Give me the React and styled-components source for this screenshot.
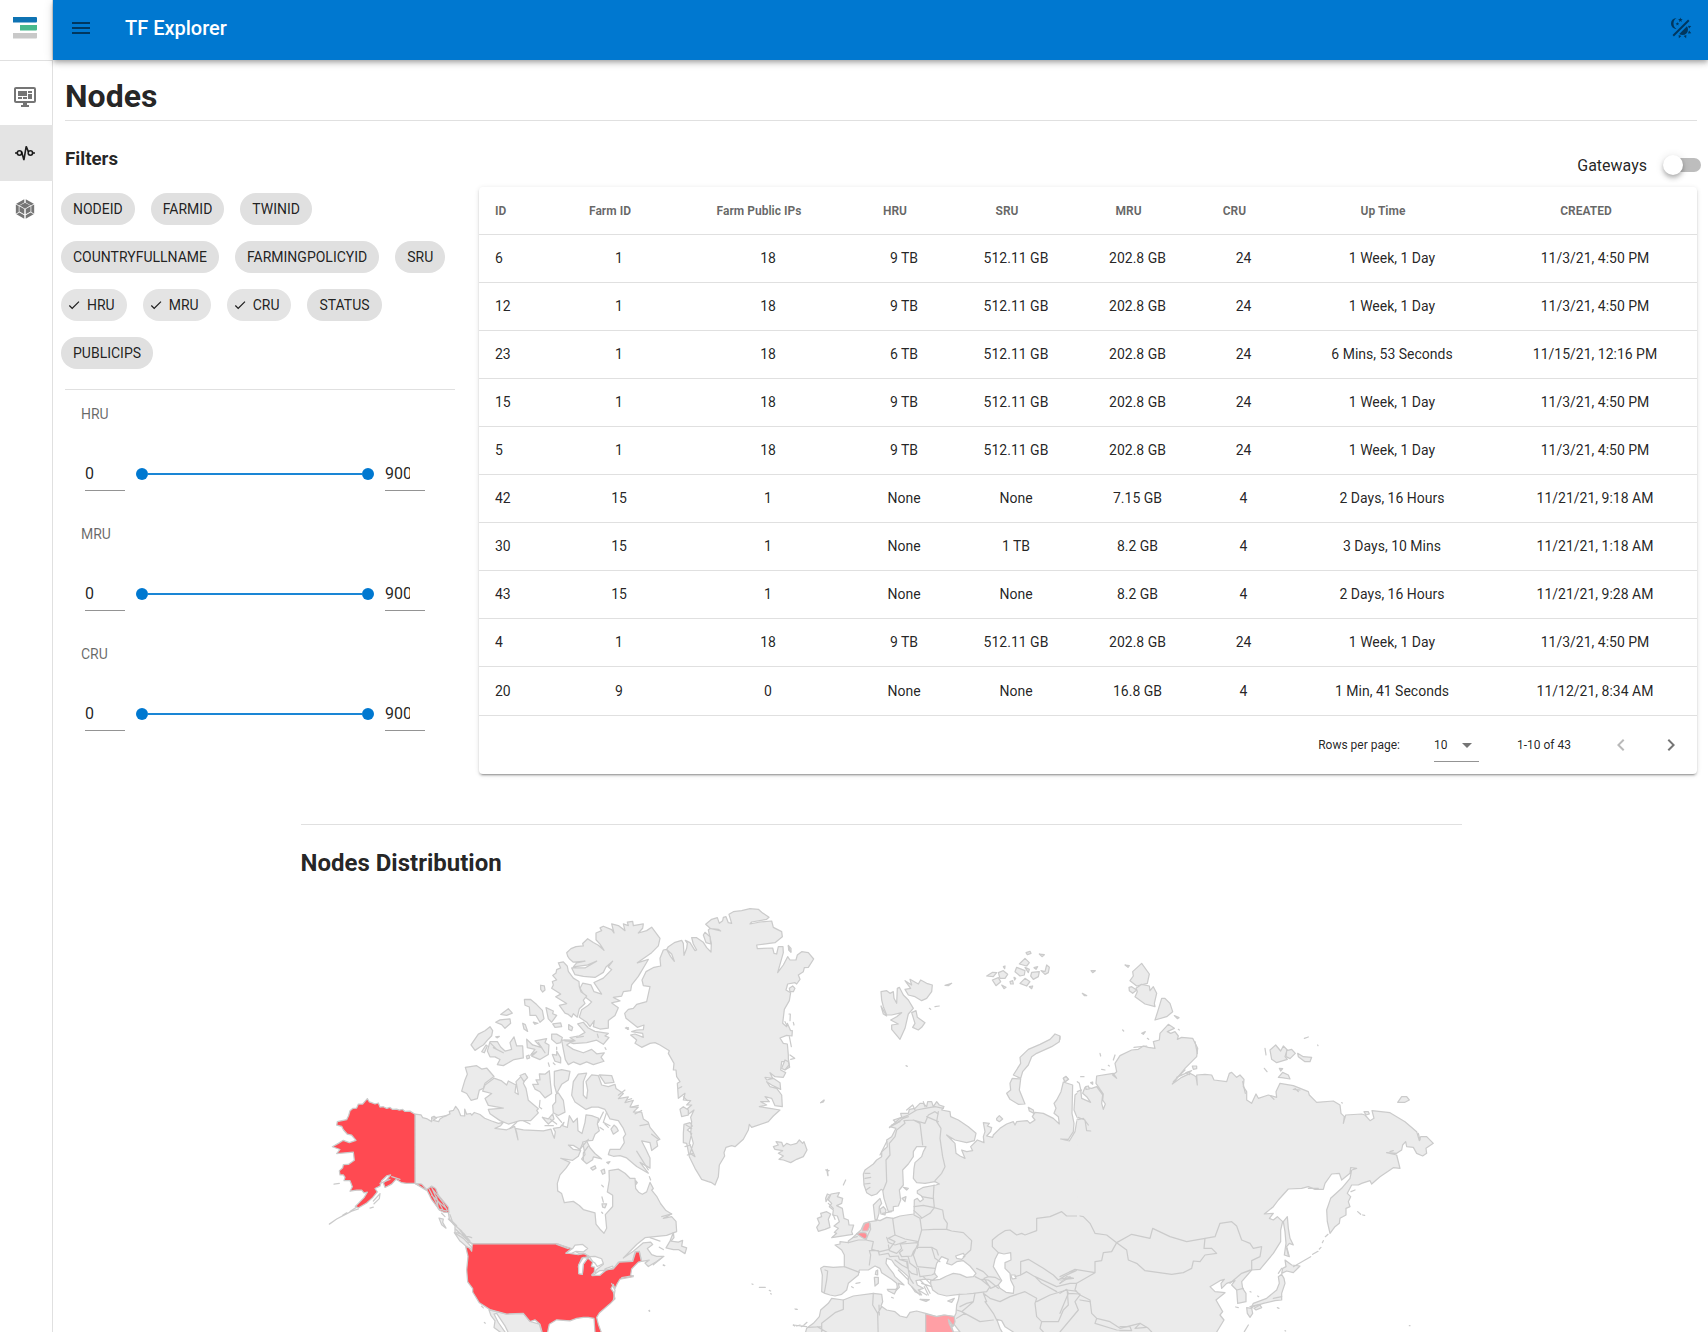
import React from "react";
import styled, { createGlobalStyle, css } from "styled-components";

const GlobalStyle = createGlobalStyle`
  * { box-sizing: border-box; }
  body { margin: 0; background: #fff; overflow: hidden; }
`;

const Shell = styled.div`
  display: flex;
  height: 1332px;
  overflow: hidden;
  font-family: Roboto, "Liberation Sans", sans-serif;
  color: rgba(0, 0, 0, 0.87);
  background: #fff;
`;

const Sidebar = styled.aside`
  flex: 0 0 53px;
  border-right: 1px solid #e0e0e0;
`;

const LogoBox = styled.div`
  height: 61px;
  padding: 17px 0 0 13px;
  border-bottom: 1px solid #e0e0e0;
  svg { display: block; }
`;

const NavList = styled.nav`
  padding-top: 8px;
`;

const NavItem = styled.div`
  height: 56px;
  padding-right: 3px;
  display: flex;
  align-items: center;
  justify-content: center;
  margin-right: -1px;
  color: ${(p) => (p.$active ? "rgba(0,0,0,.87)" : "rgba(0,0,0,.54)")};
  background: ${(p) => (p.$active ? "#e4e4e4" : "transparent")};
`;

const Main = styled.div`
  flex: 1;
  min-width: 0;
  display: flex;
  flex-direction: column;
`;

const Header = styled.header`
  flex: 0 0 60px;
  display: flex;
  align-items: center;
  padding: 0 15px 4px 16px;
  background: #0078d0;
  color: rgba(0, 0, 0, 0.54);
  box-shadow: 0 2px 4px -1px rgba(0, 0, 0, 0.2), 0 4px 5px rgba(0, 0, 0, 0.14),
    0 1px 10px rgba(0, 0, 0, 0.12);
`;

const AppTitle = styled.div`
  margin: 0 auto 0 32px;
  color: #fff;
  font-size: 20px;
  font-weight: 500;
  line-height: 24px;
`;

const Content = styled.main`
  padding: 0 11px 0 12px;
`;

const PageTitle = styled.h1`
  margin: 0;
  height: 61px;
  padding-top: 17px;
  font-size: 32px;
  line-height: 38px;
  font-weight: 700;
  border-bottom: 1px solid #e0e0e0;
`;

const Columns = styled.div`
  display: flex;
  gap: 24px;
  height: 703px;
`;

const Filters = styled.section`
  width: 390px;
`;

const FiltersTitle = styled.h3`
  margin: 0;
  height: 72px;
  padding-top: 26px;
  font-size: 18.72px;
  line-height: 24px;
  font-weight: 700;
`;

const Chips = styled.div`
  display: flex;
  flex-wrap: wrap;
  gap: 16px;
  margin: 0 -4px 20px;
`;

const Chip = styled.span`
  height: 32px;
  display: inline-flex;
  align-items: center;
  border-radius: 16px;
  padding: 0 12px;
  font-size: 14px;
  background: #e0e0e0;
  ${(p) =>
    p.$on &&
    css`
      background: #e4e4e4;
      padding-left: 4px;
      svg { margin-right: 4px; }
    `}
`;

const Ranges = styled.div`
  border-top: 1px solid #e0e0e0;
`;

const Range = styled.div`
  height: 120px;
  padding: 14px 30px 0 16px;
`;

const RangeLabel = styled.div`
  height: 20px;
  line-height: 20px;
  font-size: 14px;
  color: rgba(0, 0, 0, 0.6);
`;

const RangeRow = styled.div`
  display: flex;
  align-items: flex-end;
  margin: 33px 0 0 4px;
`;

const NumberBox = styled.div`
  width: 40px;
  height: 34px;
  padding-right: 15px;
  border-bottom: 1px solid #949494;
  font-size: 16px;
  line-height: 33px;

  span { display: block; overflow: hidden; }
`;

const Track = styled.div`
  flex: 0 0 238px;
  display: flex;
  align-items: center;
  margin: 0 11px 11px;
`;

const Thumb = styled.i`
  width: 12px;
  height: 12px;
  border-radius: 50%;
  background: #0078d0;
`;

const Bar = styled.i`
  flex: 1;
  height: 2px;
  background: #1a86d5;
`;

const TablePanel = styled.section`
  width: 1218px;
`;

const SwitchRow = styled.div`
  display: flex;
  align-items: center;
  justify-content: flex-end;
  height: 66px;
  padding-top: 22px;
  margin-right: -4px;
  font-size: 16px;
`;

const SwitchTrack = styled.div`
  display: flex;
  align-items: center;
  width: 36px;
  height: 14px;
  margin-left: 18px;
  border-radius: 7px;
  background: #bdbdbd;

  i {
    flex: none;
    width: 20px;
    height: 20px;
    margin-left: -2px;
    border-radius: 50%;
    background: #fff;
    box-shadow: 0 2px 4px -1px rgba(0, 0, 0, 0.2), 0 4px 5px rgba(0, 0, 0, 0.14),
      0 1px 10px rgba(0, 0, 0, 0.12);
  }
`;

const Card = styled.div`
  height: 587px;
  border-radius: 4px;
  background: #fff;
  box-shadow: 0 3px 1px -2px rgba(0, 0, 0, 0.2), 0 2px 2px rgba(0, 0, 0, 0.14),
    0 1px 5px rgba(0, 0, 0, 0.12);
`;

const Table = styled.table`
  width: 100%;
  table-layout: fixed;
  border-collapse: separate;
  border-spacing: 0;

  th, td {
    height: 48px;
    padding: 0 16px;
    text-align: center;
    border-bottom: 1px solid #e0e0e0;
    white-space: nowrap;
  }
  th {
    padding-right: 34px;
    padding-top: 1px;
    font-size: 12px;
    font-weight: 700;
    color: rgba(0, 0, 0, 0.6);
  }
  td { font-size: 14px; padding-bottom: 1px; }
  th:first-child, td:first-child { text-align: left; padding-right: 0; }
  tr:last-child td { height: 49px; padding-bottom: 0; }
`;

const Footer = styled.div`
  display: flex;
  align-items: center;
  justify-content: flex-end;
  height: 58px;
  padding-right: 14px;
  font-size: 12px;
`;

const PageSize = styled.div`
  display: flex;
  align-items: center;
  justify-content: space-between;
  width: 45px;
  height: 33px;
  margin: 0 38px 0 34px;
  padding: 0 2px 0 0;
  border-bottom: 1px solid #949494;
  svg { display: block; color: rgba(0, 0, 0, 0.54); }
`;

const PageNav = styled.div`
  display: flex;
  gap: 26px;
  margin-left: 38px;
  color: rgba(0, 0, 0, 0.54);
  svg:first-child { opacity: 0.5; }
`;

const MapSection = styled.section`
  width: 1161px;
  margin-left: 235.500px;
  border-top: 1px solid #e0e0e0;
`;

const MapTitle = styled.h2`
  margin: 0;
  height: 75px;
  padding-top: 24px;
  font-size: 24px;
  line-height: 28px;
  font-weight: 700;
`;

const MapSvg = styled.svg`
  display: block;
  fill: #ebebeb;
  stroke: #cbcbcb;
  stroke-width: 3.7;
  stroke-linejoin: round;
  stroke-linecap: round;
  .sea { fill: #fff; }
  .line { fill: none; }
  .hot { fill: #ff4a52; }
  .warm { fill: #ff8f95; }
  .mild { fill: #ff9fa5; }
`;

const Glyph = ({ d, size = 24, box = "0 0 24 24" }) => (
  <svg width={size} height={size} viewBox={box} fill="currentColor">
    <path d={d} />
  </svg>
);

const icons = {
  menu: "M3,6H21V8H3V6M3,11H21V13H3V11M3,16H21V18H3V16Z",
  theme:
    "M7.5,2C5.71,3.15 4.5,5.18 4.5,7.5C4.5,9.82 5.71,11.85 7.53,13C4.46,13 2,10.54 2,7.5A5.5,5.5 0 0,1 7.5,2M19.07,3.5L20.5,4.93L4.93,20.5L3.5,19.07L19.07,3.5M12.89,5.93L11.41,5L9.97,6L10.39,4.3L9,3.24L10.75,3.12L11.33,1.47L12,3.1L13.73,3.13L12.38,4.26L12.89,5.93M9.59,9.54L8.43,8.81L7.31,9.59L7.65,8.27L6.56,7.44L7.92,7.35L8.37,6.06L8.88,7.33L10.24,7.36L9.19,8.23L9.59,9.54M19,13.5A5.5,5.5 0 0,1 13.5,19C12.28,19 11.15,18.6 10.24,17.93L17.93,10.24C18.6,11.15 19,12.28 19,13.5M14.6,20.08L17.37,18.93L17.13,22.28L14.6,20.08M18.93,17.38L20.08,14.61L22.28,17.15L18.93,17.38M20.08,12.42L18.94,9.64L22.28,9.88L20.08,12.42M9.63,18.93L12.4,20.08L9.87,22.27L9.63,18.93Z",
  monitor:
    "M21,16V4H3V16H21M21,2A2,2 0 0,1 23,4V16A2,2 0 0,1 21,18H14V20H16V22H8V20H10V18H3C1.89,18 1,17.1 1,16V4C1,2.89 1.89,2 3,2H21M5,6H14V11H5V6M15,6H19V8H15V6M19,9V14H15V9H19M5,12H9V14H5V12M10,12H14V14H10V12Z",
  cube:
    "M19.38,15.99L12.38,19.95V16.87L16.74,14.47L19.38,15.99M19.86,15.56V7.28L17.3,8.75V14.08L19.86,15.56M4.1,16L11.1,19.94V16.86L6.74,14.46L4.1,16M3.62,15.55V7.27L6.18,8.75V14.07L3.62,15.55M3.92,6.74L11.1,2.68V5.66L6.5,8.19L6.46,8.21L3.92,6.74M19.56,6.74L12.38,2.68V5.66L16.98,8.19L17,8.21L19.56,6.74M11.1,15.96L6.8,13.59V8.91L11.1,11.4V15.96M12.38,15.96L16.68,13.6V8.91L12.38,11.4V15.96M7.1,8.34L11.74,5.79L16.38,8.34L11.74,11.03L7.1,8.34Z",
  check: "M21,7L9,19L3.5,13.5L4.91,12.09L9,16.17L19.59,5.59L21,7Z",
  caret: "M7,10L12,15L17,10H7Z",
  left: "M15.41,16.58L10.83,12L15.41,7.41L14,6L8,12L14,18L15.41,16.58Z",
  right: "M8.59,16.58L13.17,12L8.59,7.41L10,6L16,12L10,18L8.59,16.58Z",
};

const NodesGlyph = () => (
  <svg width="24" height="24" viewBox="0 0 24 24" fill="none" stroke="currentColor" strokeWidth="1.6" strokeLinejoin="bevel">
    <circle cx="6.5" cy="12" r="2.2" />
    <circle cx="17.4" cy="12" r="2.2" />
    <path d="M2 12H4.2M19.800 12H22M8.600 10.600L10.900 19L13.200 5.400L15.400 10.800" />
  </svg>
);

const Logo = () => (
  <svg width="24" height="22" viewBox="0 0 24 22">
    <path fill="#0e73b3" d="M0 0H23q1 0 1 1V4.500q0 1-1 1H0Z" />
    <path fill="#47b98d" d="M7 8H24V12.500q0 1-1 1H7Z" />
    <path fill="#c9c9c9" d="M0 16H24V20.500q0 1-1 1H0Z" />
  </svg>
);

const chips = [
  "NODEID", "FARMID", "TWINID", "COUNTRYFULLNAME", "FARMINGPOLICYID", "SRU",
  "HRU", "MRU", "CRU", "STATUS", "PUBLICIPS",
];
const ranges = ["HRU", "MRU", "CRU"];

const widths = [78, 124, 174, 98, 126, 117, 95, 202, 204];
const heads = ["ID", "Farm ID", "Farm Public IPs", "HRU", "SRU", "MRU", "CRU", "Up Time", "CREATED"];
const rows = [
  ["6", "1", "18", "9 TB", "512.11 GB", "202.8 GB", "24", "1 Week, 1 Day", "11/3/21, 4:50 PM"],
  ["12", "1", "18", "9 TB", "512.11 GB", "202.8 GB", "24", "1 Week, 1 Day", "11/3/21, 4:50 PM"],
  ["23", "1", "18", "6 TB", "512.11 GB", "202.8 GB", "24", "6 Mins, 53 Seconds", "11/15/21, 12:16 PM"],
  ["15", "1", "18", "9 TB", "512.11 GB", "202.8 GB", "24", "1 Week, 1 Day", "11/3/21, 4:50 PM"],
  ["5", "1", "18", "9 TB", "512.11 GB", "202.8 GB", "24", "1 Week, 1 Day", "11/3/21, 4:50 PM"],
  ["42", "15", "1", "None", "None", "7.15 GB", "4", "2 Days, 16 Hours", "11/21/21, 9:18 AM"],
  ["30", "15", "1", "None", "1 TB", "8.2 GB", "4", "3 Days, 10 Mins", "11/21/21, 1:18 AM"],
  ["43", "15", "1", "None", "None", "8.2 GB", "4", "2 Days, 16 Hours", "11/21/21, 9:28 AM"],
  ["4", "1", "18", "9 TB", "512.11 GB", "202.8 GB", "24", "1 Week, 1 Day", "11/3/21, 4:50 PM"],
  ["20", "9", "0", "None", "None", "16.8 GB", "4", "1 Min, 41 Seconds", "11/12/21, 8:34 AM"],
];

/* Map shapes, grouped by region; each group has its own local coordinates. */
const america = {
  land: [
    // Canada, mainland
    "M375 926L393 928L398 936L412 940L425 948L425 935L432 932L440 937L430 944L446 948L450 940L462 933L480 925L478 918L490 915L497 903L505 913L512 930L524 931L524 911L530 926L542 924L545 929L553 921L570 927L584 938L605 946L625 953L640 950L632 960L615 968L650 972L674 962L684 1002L680 980L676 968L700 972L760 975L783 970L788 985L793 997L796 978L790 968L810 965L822 950L818 960L832 965L838 930L850 950L862 938L864 975L876 983L885 950L888 928L905 930L926 938L922 955L928 975L915 985L908 1003L890 1005L878 1012L870 1030L850 1018L835 1017L850 1030L872 1033L865 1050L848 1062L812 1056L840 1068L828 1085L810 1105L802 1130L803 1152L815 1160L823 1187L850 1183L868 1195L880 1207L915 1217L918 1250L930 1265L942 1277L950 1262L946 1222L968 1198L968 1165L952 1155L958 1120L957 1092L985 1088L1005 1100L1020 1115L1035 1115L1037 1145L1047 1157L1057 1162L1070 1155L1080 1127L1090 1145L1085 1150L1100 1168L1112 1190L1128 1210L1145 1220L1120 1233L1145 1228L1158 1242L1160 1272L1130 1283L1065 1290L1040 1310L1000 1350L1030 1330L1060 1305L1082 1303L1088 1310L1072 1322L1085 1340L1100 1345L1122 1345L1100 1360L1075 1375L1065 1365L1078 1356L1055 1360L1048 1330L1035 1332L1028 1358L985 1362L970 1382L945 1385L925 1400L915 1402L918 1385L940 1368L932 1352L912 1348L895 1348L885 1337L870 1338L845 1325L803 1308L547 1307L520 1300L495 1275L495 1255L478 1235L475 1215L455 1180L430 1145L410 1148L375 1130Z",
    // Ellesmere
    "M833 460L830 450L843 438L858 432L880 430L878 423L893 409L910 420L925 428L942 443L930 425L918 412L918 392L935 385L930 377L940 372L965 382L972 392L965 365L985 370L1005 385L1000 365L1015 370L1012 360L1028 358L1030 370L1060 365L1058 378L1045 392L1070 385L1085 375L1110 408L1105 430L1085 450L1042 480L1075 470L1068 482L1045 520L1025 545L1022 562L1000 565L995 578L970 582L990 592L965 598L985 612L975 635L955 650L955 672L930 675L910 668L913 650L900 668L890 655L868 640L875 618L895 605L905 595L885 580L870 555L878 540L903 545L912 565L935 572L920 550L912 538L940 525L965 500L955 492L968 475L948 492L940 508L915 523L880 520L855 515L845 495L885 495L920 475L890 487L850 492L860 480L885 475L850 478L838 468Z",
    // Axel Heiberg
    "M805 480L820 477L832 490L835 505L850 525L867 535L868 550L873 565L890 578L880 590L885 600L868 615L862 640L850 630L845 640L835 632L825 628L808 605L830 600L797 580L812 572L785 555L790 545L787 535L800 530L788 517L798 510L800 500L812 495Z",
    // Devon
    "M863 660L880 655L895 672L915 682L955 688L945 695L957 700L940 720L920 708L890 715L850 718L822 708L855 710L840 700L868 695L885 685Z",
    "M815 708L850 708L830 722L850 735L880 745L905 735L920 748L943 745L933 758L942 770L910 780L890 772L870 780L850 772L835 780L826 765L820 735Z",
    "M703 588L722 588L740 603L757 620L762 645L750 655L738 635L720 635L718 610L705 605Z",
    "M768 612L790 622L788 630L800 635L785 655L775 645Z",
    "M788 660L812 657L815 668L795 670Z", "M836 662L848 670L845 680L836 676Z",
    "M698 658L706 662L713 682L702 675Z", "M730 655L744 658L735 661Z", "M752 546L763 548L765 560L758 566L752 558Z",
    "M632 632L655 615L667 628L650 635Z", "M617 655L630 648L660 645L662 658L645 673L635 662Z", "M617 698L628 697L622 701Z",
    "M543 722L565 690L585 680L600 668L608 680L605 695L595 705L580 722L570 728L555 738Z",
    "M592 740L600 712L622 712L632 728L645 740L665 735L660 715L672 698L680 725L698 725L700 760L672 765L640 783L622 780L630 765L615 757L600 757Z",
    "M575 742L588 722L592 725L583 745Z",
    "M710 705L728 722L755 730L735 710L770 703L765 715L777 722L775 750L750 765L725 755L740 742L722 752L735 735L712 730Z",
    "M787 750L800 752L800 740L812 760L812 775L795 770Z", "M785 690L800 690L817 700L812 715L800 718L785 705Z", "M709 755L717 752L719 760L711 763Z",
    // Banks and Victoria
    "M526 788L560 783L575 793L590 790L612 815L585 835L580 850L568 855L562 880L543 885L530 865L515 858L525 825L532 808Z",
    "M612 820L635 828L650 840L655 828L678 840L675 862L685 868L678 830L700 808L710 815L700 835L708 850L715 885L745 910L740 915L745 922L722 945L690 945L655 955L630 945L600 925L595 912L640 908L595 900L585 880L605 865L578 858L585 840Z",
    "M690 812L705 806L713 818L702 830Z",
    "M728 838L745 838L738 825L750 825L748 807L765 808L778 798L782 840L785 865L765 878L750 860L735 852Z",
    "M793 800L815 795L840 800L835 825L815 838L800 865L793 840Z",
    "M797 868L805 863L820 885L825 920L805 930L790 922L788 900L797 890Z",
    "M757 935L775 940L788 925L792 940L775 955L768 948Z",
    // Baffin
    "M845 870L850 830L865 808L890 805L880 830L880 870L890 880L893 855L888 830L905 810L925 812L935 840L955 845L975 838L978 850L1000 865L985 880L1015 875L1005 892L1030 885L1020 905L1045 905L1030 920L1055 920L1060 940L1075 950L1080 965L1110 1000L1100 1005L1103 1020L1085 1033L1080 1010L1055 1005L1068 1030L1080 1055L1080 1085L1050 1068L1075 1100L1040 1080L1010 1055L990 1048L970 1050L955 1045L960 1030L990 1030L1003 1010L1000 995L1007 985L1000 968L985 945L960 940L945 912L925 905L905 905L888 912L855 890Z",
    "M928 810L965 812L972 832L945 835Z",
    "M963 970L972 958L980 965L985 975L970 985Z",
    // Southampton and Hudson Bay islands
    "M878 1008L890 1005L900 1025L915 1042L935 1058L910 1052L908 1060L890 1072L875 1058L885 1045Z",
    "M902 1085L915 1078L918 1085L908 1091Z", "M933 1092L943 1088L945 1100L938 1103Z", "M950 1068L960 1066L955 1072Z", "M936 1190L950 1190L945 1202L938 1200Z", "M1037 1122L1042 1128L1038 1133Z",
    // Newfoundland
    "M1128 1320L1140 1300L1150 1275L1152 1290L1143 1300L1165 1303L1178 1298L1175 1315L1190 1320L1185 1337L1165 1325L1150 1325Z",
    // Vancouver Island, Haida Gwaii
    "M493 1275L520 1292L545 1318L540 1325L510 1300Z", "M447 1232L460 1235L458 1245L468 1262L455 1252Z",
    // Mexico
    "M597 1503L650 1515L700 1513L720 1537L748 1545L765 1600L670 1600L645 1550L620 1513L612 1515L625 1540L650 1575L640 1575L612 1555L615 1535L603 1520Z",
  ],
  hot: [
    "M375 926L360 917L345 918L338 912L328 914L320 911L308 912L300 906L290 909L280 904L270 905L265 893L255 896L245 892L238 890L232 880L225 888L218 896L205 896L200 908L188 909L180 916L176 930L170 942L142 948L140 958L155 962L160 972L172 985L185 988L198 1003L178 1010L160 1003L145 1012L127 1022L150 1030L140 1042L190 1038L193 1062L175 1074L160 1075L158 1084L148 1093L150 1105L160 1105L165 1112L162 1122L180 1122L187 1140L180 1153L200 1150L215 1150L222 1158L232 1156L222 1172L208 1186L196 1198L206 1202L230 1188L248 1172L262 1155L255 1145L270 1138L275 1122L290 1108L302 1105L290 1120L280 1128L285 1142L305 1132L318 1118L335 1128L350 1130L375 1130Z",
    "M375 1130L395 1132L410 1148L425 1138L437 1145L445 1165L460 1182L475 1200L477 1216L462 1215L450 1210L425 1178L412 1152Z",
    "M527 1316L538 1320L545 1330L547 1308L800 1308L845 1322L828 1335L865 1340L882 1337L898 1345L875 1350L865 1375L868 1396L877 1398L880 1368L893 1350L908 1362L904 1375L914 1377L913 1392L905 1400L930 1400L945 1385L970 1382L988 1362L1028 1360L1037 1332L1048 1332L1054 1360L1045 1362L1025 1382L1022 1400L1030 1405L990 1412L982 1425L975 1440L970 1428L963 1440L970 1450L975 1470L960 1485L928 1512L920 1525L925 1545L938 1580L915 1570L912 1528L895 1525L880 1525L860 1528L840 1535L800 1532L778 1545L773 1568L773 1600L765 1600L750 1545L735 1532L720 1537L700 1513L650 1515L600 1502L568 1482L548 1450L548 1440L533 1420L530 1385L534 1345Z",
  ],
  line: [
    "M118 1250L140 1235L165 1222L185 1212L205 1205M158 1224L170 1217M180 1213L200 1200M132 1132L148 1130M250 1182L270 1160L268 1175L252 1190M240 1203L250 1200M270 1130L300 1118M305 1110L330 1118M418 1148L435 1180L448 1208M425 1142L440 1175L460 1210M425 1165L470 1205M430 1150L458 1185L472 1210M440 1170L445 1205L470 1212M475 1235L505 1262L522 1278L540 1300M480 1222L490 1250L515 1270M485 1240L500 1255M497 1265L535 1300M500 1275L545 1290M510 1268L545 1308M455 1218L465 1228",
    "M575 1492L580 1497M583 1540L586 1542M1077 1505L1079 1504M1120 1370L1124 1372M965 1425L975 1445L970 1475M1080 1290L1110 1300M1090 1370L1115 1350M1108 1318L1120 1325M995 1408L1030 1402M945 730L948 735M1010 670L1014 676M800 735L800 728M790 775L795 780M775 775L778 785",
    "M940 920L925 950M950 920L940 950L960 960M680 950L660 968M895 1020L880 1040L880 1062M935 1135L940 1140M936 1170L940 1185M935 1215L938 1218M870 1030L895 1000M765 960L790 960M700 945L720 955M600 715L620 735M610 730L640 745M745 715L765 745M825 710L850 712M1040 1035L1075 1090M1085 985L1105 1000M800 1310L835 1322M425 938L470 930M750 885L748 905L755 910M925 700L922 690M860 700L880 697M1078 1110L1082 1120",
    "M1145 1220L1115 1228M985 870L1005 855M1010 885L1025 880M1025 905L1045 900M1035 925L1055 915M1050 960L1075 955M780 940L800 955M798 930L815 950M945 955L955 965M930 965L940 972",
  ],
  sea: [
    "M828 1336L848 1322L855 1312L878 1310L893 1322L880 1332L858 1330L845 1336Z",
    "M866 1396L866 1370L880 1348L893 1350L880 1368L877 1398Z",
    "M898 1346L915 1345L935 1352L940 1366L922 1375L915 1365L908 1360Z",
    "M907 1402L930 1387L948 1386L930 1400Z", "M945 1382L968 1374L970 1380L950 1385Z",
  ],
};

const atlantic = {
  land: [
    // Greenland
    "M182 258L180 235L190 210L200 208L212 230L223 244L215 222L200 208L205 200L225 187L245 181L250 190L252 226L260 205L262 190L256 181L270 188L285 212L290 210L280 192L275 173L290 173L310 187L320 203L333 216L334 190L325 150L330 145L362 153L355 148L332 146L317 133L335 118L352 113L358 130L368 122L370 112L378 110L385 128L395 130L387 103L400 95L425 92L450 86L475 88L485 97L507 112L500 118L455 126L450 132L480 126L515 123L520 142L545 155L547 170L525 188L470 195L472 206L518 204L522 220L530 222L535 200L549 200L550 218L533 278L550 255L563 230L570 240L588 240L592 225L605 215L625 218L641 237L625 262L613 263L610 275L595 285L600 298L590 312L585 308L563 312L558 330L572 338L568 362L553 388L548 430L560 440L562 430L572 452L577 452L576 468L560 466L540 474L550 490L562 492L565 525L565 535L569 562L558 568L555 545L545 545L542 570L557 578L550 592L525 590L510 578L518 595L495 592L500 600L520 595L540 608L542 628L515 615L500 605L510 620L530 625L545 645L547 680L525 677L515 655L495 650L508 665L482 665L500 675L478 680L510 685L540 690L520 708L505 725L455 742L448 733L445 750L430 778L405 800L395 797L378 802L372 818L374 828L358 855L355 890L345 915L335 908L325 905L305 898L285 865L268 830L260 790L250 788L250 760L252 733L270 728L277 738L262 750L275 760L268 790L285 830L270 820L280 790L272 760L275 725L272 712L282 690L262 705L258 690L275 675L260 675L272 662L250 660L255 640L235 655L232 610L240 605L230 590L228 570L220 570L222 550L205 520L208 512L180 495L165 488L150 490L125 502L105 490L110 480L92 465L105 462L130 472L128 460L95 455L110 450L130 449L132 435L112 442L78 415L74 400L85 388L100 385L110 373L140 365L150 320L130 317L126 300L138 275L162 262Z",
    "M240 688L250 680L265 690L265 705L245 710Z", "M310 165L315 157L330 170L332 192L318 188Z", "M565 196L573 205L573 217L566 210Z",
    "M568 325L578 318L585 325L580 335L570 335Z", "M555 540L565 545L567 555L555 570L545 565Z",
    // Iceland
    "M520 800L535 795L528 785L545 787L550 800L560 790L572 795L590 790L598 780L608 790L612 785L621 810L610 830L590 838L572 848L550 840L537 838L550 828L535 820L548 812L525 808Z",
    "M78 444L85 443L83 448Z", "M662 668L672 660L670 666Z",
  ],
  line: [
    "M567 402L571 402L570 422M568 470L574 500M580 427L582 435M555 425L560 435M570 525L584 535L572 538M678 870L687 872M682 868L684 887M478 1222L496 1222M456 1212L459 1213M508 1231L512 1233M512 1241L514 1242M588 1288L592 1288M580 1335L584 1338M590 1338L600 1335M604 1340L610 1338M612 1335L621 1327M148 1293L149 1294M190 1156L194 1157M76 444L86 447",
    "M250 650L262 662M258 735L275 745M255 800L272 795M262 825L280 820M236 625L245 620",
  ],
};

const eurasiaWest = {
  mainland:
    "M905 450L897 455L885 465L882 510L888 525L898 545L890 545L885 575L868 603L842 597L865 598L880 575L882 550L876 520L878 435L850 426L843 455L830 480L822 490L828 505L822 520L835 530L838 552L820 535L790 520L765 517L757 530L765 540L750 550L742 542L710 545L705 555L700 545L680 552L660 565L640 585L638 592L620 588L632 575L635 563L622 558L628 550L610 548L615 575L610 590L612 608L592 600L572 620L578 632L560 635L545 630L555 655L540 648L528 640L525 610L515 600L500 585L525 600L560 608L583 602L588 580L565 560L535 540L512 530L510 515L485 510L492 500L478 495L470 485L460 500L455 485L443 485L440 500L430 490L420 490L405 505L388 508L385 520L362 520L365 532L340 540L350 550L330 560L348 565L335 590L320 600L322 620L305 635L305 650L290 660L280 672L255 690L250 702L252 735L260 758L275 767L290 762L303 748L308 750L312 775L320 800L325 815L340 812L340 800L355 798L362 780L358 750L370 735L368 690L385 672L400 650L400 635L410 620L438 620L430 635L425 650L405 668L402 685L400 715L410 728L435 730L465 725L478 732L468 735L430 742L412 752L412 760L425 768L430 778L420 785L412 775L403 780L402 822L380 825L360 828L340 835L320 832L300 842L285 838L280 795L300 775L305 790L298 800L297 820L290 842L270 845L252 850L243 870L230 882L218 893L205 903L205 908L180 905L180 912L165 915L185 930L193 945L193 980L160 982L132 979L122 985L127 1005L125 1055L135 1060L150 1065L165 1068L185 1063L200 1050L205 1030L235 1005L238 990L265 990L285 978L300 985L305 998L335 1018L350 1030L352 1042L340 1060L348 1052L358 1042L355 1030L372 1035L345 1010L340 1000L328 985L318 970L320 955L335 960L345 975L365 992L385 1010L385 1030L395 1040L405 1055L425 1065L415 1050L430 1045L412 1035L408 1022L430 1018L445 1018L458 1020L472 1010L463 1000L470 970L485 950L505 958L500 970L515 975L530 965L550 962L570 978L588 1000L580 1010L560 1012L540 1003L520 1000L500 1008L480 1018L452 1022L452 1032L458 1050L475 1062L500 1068L538 1063L535 1080L530 1095L528 1120L523 1130L490 1125L470 1130L437 1120L410 1113L390 1117L380 1133L360 1128L345 1115L320 1110L303 1098L308 1085L305 1063L280 1060L220 1068L190 1080L155 1075L145 1090L122 1110L118 1130L100 1150L80 1165L70 1200L905 1200",
  land: [
    // Svalbard
    "M303 155L320 152L330 160L340 155L342 175L350 190L352 145L358 142L370 165L385 180L400 205L385 222L375 265L360 298L335 268L335 255L355 252L332 240L350 230L365 218L335 225L320 225L310 200L305 180Z",
    "M375 122L395 135L390 118L415 132L422 120L440 130L457 135L455 155L440 175L425 182L405 170L385 165L375 148L392 145Z",
    "M395 218L408 212L412 232L435 248L425 262L415 270L398 262L405 250Z",
    "M303 198L310 210L320 228L310 222Z",
    // Franz Josef Land
    "M620 108L638 97L650 98L640 110Z", "M655 98L670 92L683 103L675 115L660 115Z", "M637 120L655 113L662 125L648 137Z",
    "M718 72L735 55L748 68L740 78Z", "M705 95L710 82L735 92L733 105L720 108Z", "M735 82L748 88L745 98Z", "M752 108L755 97L778 95L775 110L760 118Z", "M783 92L795 95L800 75L808 82L805 98L795 103Z",
    "M720 130L735 115L750 125L740 138Z", "M665 135L678 142L672 146Z", "M690 125L698 122L700 132L692 132Z", "M738 38L750 34L753 40L742 44Z", "M778 42L793 44L786 50Z", "M748 140L758 138L755 146Z", "M702 112L707 115L704 120Z", "M762 83L773 80L768 88Z", "M670 80L675 78L674 86Z",
    "M495 136L515 130L505 137Z",
    // Novaya Zemlya
    "M700 405L722 370L720 352L745 328L780 313L810 298L825 282L840 288L838 305L815 320L770 340L755 350L745 375L728 395L722 415Z",
    "M697 415L722 417L718 450L735 492L715 493L690 478L680 460L692 450L690 430Z",
    "M745 502L760 510L762 520L748 513Z", "M650 535L658 527L668 537L658 545L650 540Z", "M850 415L858 409L866 418L855 425Z",
    // Great Britain and Ireland
    "M153 762L178 758L172 770L188 775L185 790L170 797L187 805L192 835L205 840L207 855L221 855L215 875L218 883L175 890L155 893L170 880L163 877L175 865L162 858L178 845L172 828L158 825L160 810L148 800L155 790L145 780Z",
    "M112 835L125 830L122 820L140 815L152 822L145 838L150 862L135 868L115 874L110 862L118 850Z",
    "M137 775L142 762L150 765L138 785Z",
    // Mediterranean and Baltic islands
    "M283 1012L295 1012L295 1030L285 1038Z", "M288 993L293 990L293 1005L286 1003Z", "M322 1048L350 1048L343 1062L325 1053Z", "M420 1078L448 1079L438 1084Z", "M503 1083L523 1075L515 1087Z",
    "M300 808L310 800L318 810L315 825L303 822Z", "M366 775L378 770L375 785Z", "M370 742L385 745L380 750Z",
  ],
  sea: [
    "M655 938L672 942L692 938L693 960L675 968L675 985L690 1000L692 1020L702 1040L700 1060L678 1057L660 1045L655 1035L665 1022L655 1005L640 980L645 958Z",
    "M527 948L550 940L555 948L545 958L530 955Z", "M650 1138L665 1142L675 1160L700 1176L700 1200L680 1200L660 1165Z", "M503 1138L512 1150L520 1176L540 1176L520 1150L518 1160Z",
    "M692 1005L705 1005L708 1015L697 1017Z",
  ],
  line: [
    "M310 750L320 725L318 660L330 645L328 610L345 590L350 570L375 550L372 542L400 540L420 550L428 615M400 540L435 550L445 525L465 515L475 522M440 530L475 545M475 515L470 545L483 565L480 595L488 650L495 680L485 700L465 722M328 563L360 535L385 525L410 510L435 505L465 500L490 505M255 700L270 700M255 715L272 712M253 732L270 730M258 750L270 742M350 550L370 535L385 530",
    "M462 735L460 770L463 803L488 810L492 835L502 850L500 868L515 873L550 878L575 902L572 930L550 950M425 770L460 776M402 800L430 796L463 803M402 812L422 830L425 835L450 820L463 803M338 835L342 865L345 885L375 897L415 905L425 870L462 868L500 868M425 870L420 835L402 825",
    "M270 850L272 868L265 882L258 900L280 905L275 928L300 935L328 928L345 905L325 895L345 885M320 892L325 907L345 915L378 905M325 915L328 932L350 940L365 925L360 910M365 912L412 908L415 915L400 935L395 948L365 950L358 938L368 930M412 915L400 945L412 980L465 985M412 922L455 922L465 955L480 965M455 922L470 930L475 945M268 975L272 945L268 932L295 932L298 945L325 940L330 950L355 948L358 958L380 965L383 985L365 975L345 960M385 952L390 970L410 985L412 1005L395 1000L385 990L383 965M415 985L420 1010L455 1005L465 1000M385 990L390 1015L400 1030M205 908L235 900L258 900M218 893L232 890M193 980L238 997M135 990L143 993L140 1020L133 1058M412 925L415 905",
    "M538 1063L560 1062L580 1060L620 1055L630 1040L605 1020L585 1010M590 985L610 995L625 1010L612 1015L632 1045L655 1035M625 1010L645 1012L660 1020M605 1018L625 1020L655 1045M585 1060L580 1085L545 1115L530 1110M540 1100L560 1090L580 1085M610 1060L620 1085L615 1085L640 1120L650 1140M545 1115L600 1145L640 1140M530 1135L555 1120M610 1060L630 1075L660 1085L690 1070L735 1055L770 1075L765 1090L770 1130L785 1145L780 1165L790 1176M770 1085L810 1065L860 1050L900 1055M785 1145L835 1145L850 1110L865 1095L862 1055",
    "M655 938L637 920L637 900L655 885L675 872L690 870L710 885L725 880L735 885L770 872L770 835L810 830L845 815L860 828L905 828M722 1005L722 965L745 958L790 985L820 1005L835 1020L850 1010L870 1000L905 985M722 1005L705 1010M722 1005L740 995L765 1010L785 1030L830 1055M765 1010L830 1040L870 1030L905 1030M845 1015L880 1015M840 1030L870 1010M870 995L900 990",
    "M190 1080L190 1108L165 1118L125 1150L125 1160L85 1162M125 1160L125 1200M280 1060L278 1095L293 1120L295 1200M297 1095L298 1125M293 1120L305 1100M437 1122L437 1200M112 1160L180 1200",
    "M448 205L452 208M465 200L478 198M378 377L382 379M122 488L132 482M25 18L32 35M138 690L146 692M141 692L143 705M190 735L197 720M160 825L165 838M215 1040L220 1043M228 1030L240 1028M45 1107L50 1108M40 1155L80 1160M335 1072L340 1074M420 1020L440 1040L450 1060M425 1030L455 1040M415 1050L440 1065M430 1010L450 1030M433 1040L445 1065M395 1040L420 1065M308 820L335 815M405 510L398 495L380 510M435 500L430 485M360 545L335 555M320 605L300 645M145 790L160 805M355 990L385 1020M365 958L382 960",
  ],
};

const eurasiaEast = {
  mainland:
    "M52 455L62 450L65 475L92 487L80 470L68 460L75 442L95 445L110 440L128 465L125 490L130 508L136 492L128 480L130 462L108 430L110 408L160 400L170 415L158 405L170 395L165 370L180 347L215 330L235 328L250 318L265 322L285 325L280 305L298 300L300 280L325 253L343 265L322 275L332 280L345 275L355 288L352 298L365 292L398 295L413 325L410 350L375 385L337 432L365 412L390 400L400 405L408 410L412 435L410 405L435 403L455 405L462 420L500 425L508 400L515 397L530 412L540 405L552 418L550 440L560 455L560 480L575 490L588 462L595 475L625 465L650 472L648 455L660 430L700 437L745 455L748 465L770 487L820 483L840 495L843 520L853 530L850 550L857 525L905 522L915 525L930 542L942 535L936 512L990 518L1035 545L1070 575L1078 602L1082 590L1100 590L1120 610L1098 625L1100 640L1088 648L1070 640L1060 622L1040 620L1037 605L1028 615L1025 630L1010 640L980 638L1010 645L1020 685L1000 683L960 710L935 732L930 722L905 730L895 735L875 735L862 760L872 770L865 785L870 800L858 805L858 825L840 835L838 850L825 860L810 880L802 845L800 810L812 775L845 745L870 715L875 690L890 685L872 683L870 700L845 720L838 700L815 702L795 730L790 748L765 748L745 740L725 745L685 747L655 780L640 800L613 822L640 820L628 835L640 840L652 830L668 845L662 870L662 905L640 940L600 988L575 990L545 1025L548 1045L558 1060L558 1085L533 1090L530 1050L515 1035L525 1022L500 1030L485 1045L483 1030L493 1018L480 1022L450 1040L465 1055L495 1058L468 1080L488 1115L480 1125L492 1140L470 1176L465 1200L50 1200",
  land: [
    "M218 95L245 70L268 102L262 130L230 138L210 122L220 108Z", "M228 145L245 133L268 138L270 152L280 140L290 160L283 190L285 200L255 192L225 170L232 155Z",
    "M207 142L215 140L230 150L218 160L208 152Z", "M305 175L315 175L330 190L338 215L320 230L285 240L293 215Z",
    "M195 75L208 77L204 82Z", "M93 92L106 92L98 98Z", "M67 160L80 167L73 167Z", "M343 227L357 233L352 236Z", "M245 280L256 275L250 283Z",
    "M630 330L647 315L662 333L670 318L682 330L675 350L682 358L650 368L635 358Z", "M680 332L695 328L706 340L690 356L678 350Z", "M713 340L730 350L755 352L750 365L735 365L715 350Z",
    "M655 412L668 397L685 405L690 417L665 413Z", "M658 385L668 386L662 393Z", "M1013 487L1025 470L1040 470L1048 480L1035 487Z",
    "M397 378L410 378L410 386L400 388Z", "M378 398L390 394L388 404Z", "M912 515L925 515L928 522L918 525Z",
    // Sakhalin
    "M670 845L682 830L685 865L690 895L700 915L688 910L680 920L688 950L673 945L678 910L675 875Z",
    // Japan
    "M675 960L695 975L720 978L700 998L680 993L665 1000L668 985L678 980Z", "M665 1003L672 1015L675 1030L665 1060L665 1080L645 1082L610 1090L580 1100L570 1110L580 1090L620 1075L650 1050L658 1030L655 1010Z",
    "M560 1103L575 1105L578 1120L570 1132L562 1120Z", "M582 1105L600 1095L605 1103L588 1110Z",
    "M77 440L85 438L88 447L78 448Z", "M10 415L18 410L25 418L15 425Z", "M92 428L98 426L98 433Z",
  ],
  line: [
    "M60 828L70 830L90 850L105 880L140 885L170 908M170 908L155 935L130 938L125 962L105 965L105 998L45 988L0 1010M105 998L50 1030L45 1050L60 1065L90 1080L95 1120L110 1135L150 1145L180 1165L240 1150L265 1165L275 1176M170 908L215 883L270 895L278 865L330 890L380 905L435 895L432 925L455 925L470 940L435 945L420 965L400 963L395 985L370 998L335 1003L255 992L230 970L205 960L200 930L170 908M435 895L465 890L480 850L515 845L530 858L545 900L570 910L580 925L605 920L600 950L575 962L575 990M545 1000L575 990M530 1050L550 1045M510 1030L545 1000L570 990",
    "M0 1020L40 1015L20 1010L0 1030M0 1060L20 1048L25 1060L60 1062M25 1060L0 1120M60 1065L45 1085L55 1110L0 1176M60 1080L90 1085M110 1135L105 1150L170 1170L215 1172M180 1160L210 1160L215 1172L180 1172M240 1150L225 1165L260 1162",
    "M615 325L618 345M613 385L621 395M733 295L745 291M773 315L774 317M893 815L902 823M908 825L914 826M873 755L885 750M796 890L804 883M787 908L790 902M778 927L783 922M758 943L774 934M735 960L752 950M700 980L735 960M845 488L847 489M652 1103L657 1105M527 1101L535 1103M553 1175L565 1155M570 1055L573 1056M593 1068L596 1070M675 1172L677 1173M1048 1157L1050 1157M188 270L191 273M262 295L266 298M120 340L122 348M125 388L135 390M145 376L148 378M62 410L72 410M52 425L58 430L62 448M54 532L75 540L80 572L92 573M50 540L70 535L85 555M222 322L260 318M160 360L165 345M405 305L412 340M350 412L395 392M705 445L715 455M700 448L720 450M548 425L556 460M632 468L642 478M990 635L1000 632M1075 580L1080 600M375 390L340 425M355 268L358 270M0 290L0 298M745 745L775 745M570 1100L600 1093M640 1075L665 1070M680 925L685 945M655 1000L665 985",
  ],
};

const Shapes = ({ data }) => (
  <>
    {data.mainland && <path d={data.mainland} />}
    {data.land.map((d) => <path key={d} d={d} />)}
    {(data.hot || []).map((d) => <path key={d} className="hot" d={d} />)}
    {(data.sea || []).map((d) => <path key={d} className="sea" d={d} />)}
    {data.line.map((d) => <path key={d} className="line" d={d} />)}
  </>
);

const WorldMap = () => (
  <MapSvg width="1161" height="432" viewBox="0 0 1161 432">
    <g transform="translate(-11 -100) scale(.33333 .33929)"><Shapes data={america} /></g>
    <g transform="translate(299 -20) scale(.33333)"><Shapes data={atlantic} /></g>
    <g transform="translate(479 40) scale(.33333)">
      <Shapes data={eurasiaWest} />
      <path className="mild" d="M255 850L268 846L270 858L263 873L247 873L248 863Z" />
      <path className="warm" d="M230 881L245 877L258 879L262 888L256 898L245 892Z" />
      <path className="mild" d="M437 1122L470 1130L495 1125L523 1130L525 1145L520 1158L505 1138L508 1152L520 1176L525 1200L437 1200Z" />
    </g>
    <g transform="translate(759 40) scale(.33333)"><Shapes data={eurasiaEast} /></g>
  </MapSvg>
);

export default function App() {
  return (
    <>
      <GlobalStyle />
      <Shell>
        <Sidebar>
          <LogoBox><Logo /></LogoBox>
          <NavList>
            <NavItem><Glyph d={icons.monitor} /></NavItem>
            <NavItem $active><NodesGlyph /></NavItem>
            <NavItem><Glyph d={icons.cube} box="1.100 0.700 21.260 21.260" /></NavItem>
          </NavList>
        </Sidebar>
        <Main>
          <Header>
            <Glyph d={icons.menu} />
            <AppTitle>TF Explorer</AppTitle>
            <Glyph d={icons.theme} />
          </Header>
          <Content>
            <PageTitle>Nodes</PageTitle>
            <Columns>
              <Filters>
                <FiltersTitle>Filters</FiltersTitle>
                <Chips>
                  {chips.map((name) => {
                    const on = ranges.includes(name);
                    return (
                      <Chip key={name} $on={on}>
                        {on && <Glyph d={icons.check} size={18} box="-3 -3 30 30" />}
                        {name}
                      </Chip>
                    );
                  })}
                </Chips>
                <Ranges>
                  {ranges.map((name) => (
                    <Range key={name}>
                      <RangeLabel>{name}</RangeLabel>
                      <RangeRow>
                        <NumberBox><span>0</span></NumberBox>
                        <Track><Thumb /><Bar /><Thumb /></Track>
                        <NumberBox><span>900</span></NumberBox>
                      </RangeRow>
                    </Range>
                  ))}
                </Ranges>
              </Filters>
              <TablePanel>
                <SwitchRow>Gateways<SwitchTrack><i /></SwitchTrack></SwitchRow>
                <Card>
                  <Table>
                    <colgroup>{widths.map((w, i) => <col key={i} style={{ width: w }} />)}</colgroup>
                    <thead><tr>{heads.map((h) => <th key={h}>{h}</th>)}</tr></thead>
                    <tbody>
                      {rows.map((r) => (
                        <tr key={r[0]}>{r.map((c, i) => <td key={i}>{c}</td>)}</tr>
                      ))}
                    </tbody>
                  </Table>
                  <Footer>
                    Rows per page:
                    <PageSize>10<Glyph d={icons.caret} size={20} box="2 2 20 20" /></PageSize>
                    1-10 of 43
                    <PageNav><Glyph d={icons.left} /><Glyph d={icons.right} /></PageNav>
                  </Footer>
                </Card>
              </TablePanel>
            </Columns>
            <MapSection>
              <MapTitle>Nodes Distribution</MapTitle>
              <WorldMap />
            </MapSection>
          </Content>
        </Main>
      </Shell>
    </>
  );
}
